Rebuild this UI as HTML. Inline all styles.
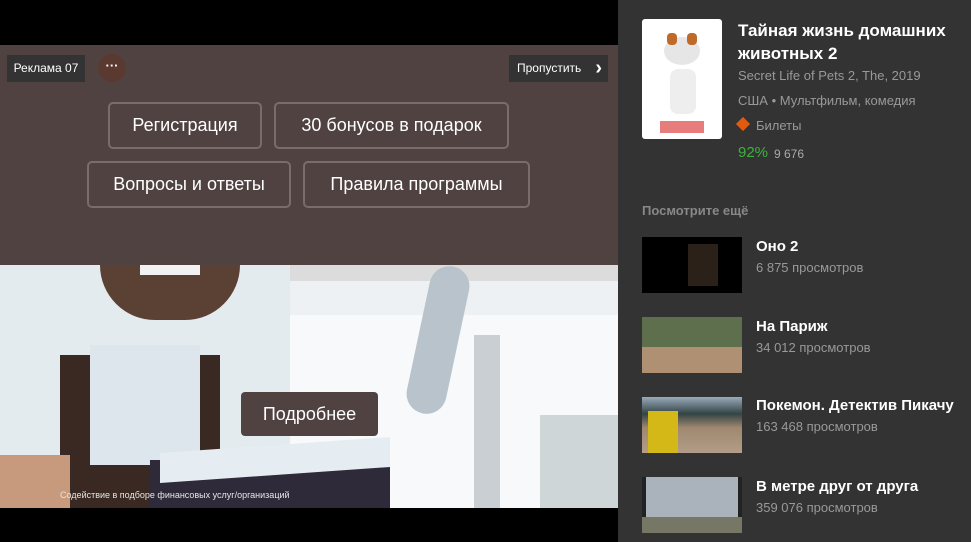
<!DOCTYPE html>
<html><head><meta charset="utf-8"><style>
*{margin:0;padding:0;box-sizing:border-box}
body{width:971px;height:542px;overflow:hidden;background:#333;font-family:"Liberation Sans",sans-serif;position:relative}
.vid{position:absolute;left:0;top:0;width:618px;height:542px;background:#000;overflow:hidden}
.photo{position:absolute;left:0;top:265px;width:618px;height:243px;background:#eef1f3;overflow:hidden}
.ad{position:absolute;left:0;top:45px;width:618px;height:220px;background:#4f4241}
.btn{position:absolute;border:2px solid #7a6c6b;border-radius:5px;color:#fff;font-size:18px;display:flex;align-items:center;justify-content:center;height:47px}
.r{position:absolute;left:642px;color:#fff}
.t{position:absolute;left:756px;color:#fff;font-weight:bold;font-size:15px}
.v{position:absolute;left:756px;color:#999;font-size:13px}
.th{position:absolute;left:642px;width:100px;height:56px}
</style></head><body>
<div class="vid">
 <div class="photo">
  <div style="position:absolute;left:0;top:0;width:618px;height:16px;background:#dcdcdc"></div>
  <div style="position:absolute;left:270px;top:50px;width:348px;height:193px;background:#f7f9fa"></div>
  <div style="position:absolute;left:0;top:0;width:290px;height:243px;background:#e4ebef"></div>
  <div style="position:absolute;left:100px;top:0;width:140px;height:55px;background:#5b4133;border-radius:0 0 60px 60px"></div>
  <div style="position:absolute;left:140px;top:0;width:60px;height:10px;background:#f2f2f2"></div>
  <div style="position:absolute;left:60px;top:90px;width:160px;height:153px;background:#3a2822"></div>
  <div style="position:absolute;left:90px;top:80px;width:110px;height:120px;background:#dce6ec"></div>
  <div style="position:absolute;left:0;top:190px;width:70px;height:53px;background:#c79a7d"></div>
  <div style="position:absolute;left:150px;top:195px;width:240px;height:48px;background:#2e2a3a"></div>
  <div style="position:absolute;left:160px;top:180px;width:230px;height:30px;background:#e6edf2;transform:skewY(-4deg)"></div>
  <div style="position:absolute;left:418px;top:0;width:40px;height:150px;background:#b8c3cb;border-radius:20px;transform:rotate(12deg)"></div>
  <div style="position:absolute;left:474px;top:70px;width:26px;height:173px;background:#c9cfd3"></div>
  <div style="position:absolute;left:540px;top:150px;width:78px;height:93px;background:#cfd6d8"></div>
  <div style="position:absolute;left:60px;top:225px;color:#e5e5e5;font-size:9px">Содействие в подборе финансовых услуг/организаций</div>
 </div>
 <div class="ad">
  <div style="position:absolute;left:7px;top:10px;width:78px;height:27px;background:#333;color:#fff;font-size:12px;line-height:27px;text-align:center">Реклама 07</div>
  <div style="position:absolute;left:98px;top:9px;width:28px;height:28px;border-radius:50%;background:#5a3a30;color:#fff;font-size:13px;text-align:center;line-height:24px;font-weight:bold">···</div>
  <div style="position:absolute;left:509px;top:10px;width:99px;height:27px;background:#333;color:#fff;font-size:12px;line-height:27px;padding-left:8px">Пропустить<span style="position:absolute;right:6px;top:0;font-size:20px;font-weight:bold;line-height:26px">›</span></div>
  <div class="btn" style="left:108px;top:57px;width:154px">Регистрация</div>
  <div class="btn" style="left:274px;top:57px;width:235px">30 бонусов в подарок</div>
  <div class="btn" style="left:87px;top:116px;width:204px">Вопросы и ответы</div>
  <div class="btn" style="left:303px;top:116px;width:227px">Правила программы</div>
 </div>
 <div style="position:absolute;left:241px;top:392px;width:137px;height:44px;background:#4f4241;border-radius:4px;color:#fff;font-size:18px;display:flex;align-items:center;justify-content:center">Подробнее</div>
</div>
<div style="position:absolute;left:642px;top:19px;width:80px;height:120px;background:#fff;border-radius:3px">
 <div style="position:absolute;left:22px;top:18px;width:36px;height:28px;background:#e6e6e6;border-radius:50%"></div>
 <div style="position:absolute;left:25px;top:14px;width:10px;height:12px;background:#c06a2a;border-radius:4px"></div>
 <div style="position:absolute;left:45px;top:14px;width:10px;height:12px;background:#c06a2a;border-radius:4px"></div>
 <div style="position:absolute;left:28px;top:50px;width:26px;height:45px;background:#eee;border-radius:8px"></div>
 <div style="position:absolute;left:18px;top:102px;width:44px;height:12px;background:#d44;opacity:.7"></div>
</div>
<div class="r" style="left:738px;top:19px;font-size:17px;font-weight:bold;line-height:23px;width:230px">Тайная жизнь домашних животных 2</div>
<div class="r" style="left:738px;top:68px;font-size:13px;color:#999">Secret Life of Pets 2, The, 2019</div>
<div class="r" style="left:738px;top:93px;font-size:13px;color:#999">США • Мультфильм, комедия</div>
<div class="r" style="left:738px;top:119px;width:10px;height:10px;background:#e05a10;transform:rotate(45deg)"></div>
<div class="r" style="left:756px;top:118px;font-size:13px;color:#999">Билеты</div>
<div class="r" style="left:738px;top:144px;font-size:15px;color:#3bb33b">92%</div>
<div class="r" style="left:774px;top:147px;font-size:12px;color:#aaa">9 676</div>
<div class="r" style="top:203px;font-size:13px;color:#888;font-weight:bold">Посмотрите ещё</div>
<div class="th" style="top:237px;background:#000"><div style="position:absolute;left:46px;top:7px;width:30px;height:42px;background:#2c2118"></div></div>
<div class="t" style="top:238px">Оно 2</div><div class="v" style="top:260px">6 875 просмотров</div>
<div class="th" style="top:317px;background:#5e6f4e"><div style="position:absolute;left:0;top:30px;width:100px;height:26px;background:#b09072"></div></div>
<div class="t" style="top:318px">На Париж</div><div class="v" style="top:340px">34 012 просмотров</div>
<div class="th" style="top:397px;background:linear-gradient(#9ab 0,#344 30%,#a08870 55%,#b39d88 100%)"><div style="position:absolute;left:6px;top:14px;width:30px;height:42px;background:#d4b818"></div></div>
<div class="t" style="top:397px">Покемон. Детектив Пикачу</div><div class="v" style="top:419px">163 468 просмотров</div>
<div class="th" style="top:477px;background:#aab3bb"><div style="position:absolute;left:0;top:0;width:100px;height:56px;border:4px solid #222;border-top:none"></div><div style="position:absolute;left:0;top:40px;width:100px;height:16px;background:#776"></div></div>
<div class="t" style="top:478px">В метре друг от друга</div><div class="v" style="top:500px">359 076 просмотров</div>
</body></html>
